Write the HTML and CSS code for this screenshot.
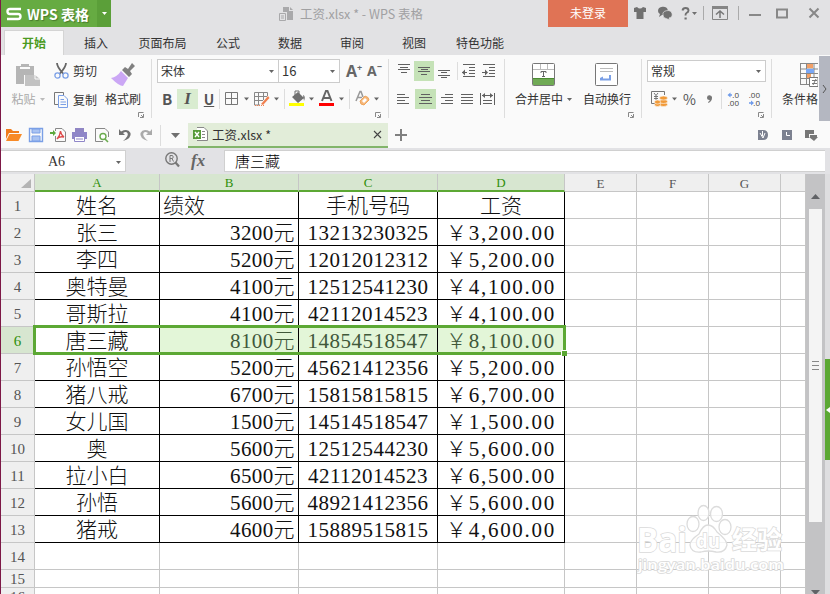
FILE: index.html
```html
<!DOCTYPE html>
<html lang="zh-CN">
<head>
    <meta charset="UTF-8">
    <title>工资.xlsx * - WPS 表格</title>
    <link rel="stylesheet" href="styles.css">
</head>
<body>
    <div class="window">
        <div class="titlebar">
            <div class="brand">
                <svg width="16" height="14" viewBox="0 0 16 14" fill="none" stroke="#fff" stroke-width="2.4"><path d="M15 2H4Q1.500 2 1.500 4.500Q1.500 7 4 7H12Q14.500 7 14.500 9.500Q14.500 12 12 12H1"/></svg>
                <span class="brand-name">WPS 表格</span>
                <span class="brand-more"><svg width="5" height="3"><path d="M0 0H5L2.500 3Z" fill="#fff"/></svg></span>
            </div>
            <div class="doc-title">
                <svg width="15" height="14" viewBox="0 0 15 14"><path d="M4 0H10V4H14V13H8V5H4Z" fill="#a9a9ab"/><path d="M11 0L14 3H11Z" fill="#a9a9ab"/><path d="M.5 6.500H6.500V13.500H.5ZM2 9H5M2 11H5" fill="none" stroke="#a9a9ab"/></svg>
                <span>工资.xlsx * - WPS 表格</span>
            </div>
            <div class="login">未登录</div>
            <div class="win-icons">
                <svg width="202" height="27" viewBox="0 0 202 27">
                    <path d="M6 8L9 7Q12 10 15 7L18 8V12H15.500V19H8.500V12H6Z" fill="#707070"/>
                    <path d="M30 11A5 4.300 0 1 1 37 15L34 15L31 17L32 14Q30 13 30 11Z" fill="#707070"/>
                    <path d="M35 15A4.600 3.800 0 1 1 41 18L42 20L38 18.500Q35 18 35 15Z" fill="#707070" stroke="#e2e2e4" stroke-width=".7"/>
                    <path d="M54.500 10.500Q55 8 57.500 8Q60.500 8 60.500 10.500Q60.500 12 58.500 13Q57.500 13.600 57.500 15.500" fill="none" stroke="#707070" stroke-width="1.900"/><path d="M56.500 17.500H58.700V19.500H56.500Z M64 12H69L66.500 15Z" fill="#707070"/>
                    <path d="M75.500 6V20M110.500 6V20" stroke="#aaa"/>
                    <path d="M84.500 6.500H99.500V19.500H84.500Z" fill="none" stroke="#858585"/><path d="M84 6H100V9H84Z" fill="#858585"/>
                    <path d="M92 18V11.500M88 14.500L92 11L96 14.500" fill="none" stroke="#777" stroke-width="1.500"/>
                    <path d="M121 15H133" stroke="#888" stroke-width="2"/>
                    <path d="M149 9.500H159V17.500H149Z" fill="none" stroke="#888" stroke-width="2"/>
                    <path d="M181.500 8.500L190.500 17.500M190.500 8.500L181.500 17.500" stroke="#888" stroke-width="2"/>
                </svg>
            </div>
        </div>

        <div class="tabs">
            <div class="tab active">开始</div>
            <div class="tab">插入</div>
            <div class="tab wide">页面布局</div>
            <div class="tab">公式</div>
            <div class="tab">数据</div>
            <div class="tab">审阅</div>
            <div class="tab">视图</div>
            <div class="tab special">特色功能</div>
        </div>

        <div class="ribbon">
            <div class="group clipboard">
                <div class="big-tool paste">
                    <svg width="25" height="24" viewBox="0 0 25 24"><path d="M0 3H5V1H13V3H18V12H8V21H0Z" fill="#b5b5b5"/><path d="M4 4H14V6H4Z" fill="#fafafa"/><path d="M9 12H19L24 16V23H9Z" fill="#c2c2c2"/><path d="M19 12V16H24" fill="none" stroke="#fafafa"/></svg>
                    <span class="label">粘贴<svg class="caret" width="5" height="3"><path d="M0 0H5L2.500 3Z"/></svg></span>
                </div>
                <div class="small-tools">
                    <div class="small-tool">
                        <svg width="15" height="16" viewBox="0 0 15 16" fill="none"><path d="M3 0Q3 4 9.500 11M12 0Q12 4 5.500 11" stroke="#666" stroke-width="1.800"/><circle cx="3.500" cy="12.500" r="2.600" stroke="#7a9fe6" stroke-width="1.300"/><circle cx="11.500" cy="12.500" r="2.600" stroke="#7a9fe6" stroke-width="1.300"/></svg>
                        <span>剪切</span>
                    </div>
                    <div class="small-tool">
                        <svg width="15" height="16" viewBox="0 0 15 16" fill="none"><path d="M4 12.500H.5V.5H9.500V3" stroke="#777"/><path d="M4.500 3.500H10L13.500 7V15.500H4.500Z" stroke="#7a9fe6"/><path d="M6.500 7.500H10M6.500 10H12M6.500 12.500H12" stroke="#7a9fe6"/></svg>
                        <span>复制</span>
                    </div>
                </div>
                <div class="big-tool brush">
                    <svg width="24" height="24" viewBox="0 0 24 24"><path d="M11 7L14 4L17 6L21 0L24 3L19 8L21 11L18 14Z" fill="#808080"/><path d="M10 8L17 15L12 23Q8 23 0 15Q6 14 10 8Z" fill="#cba7f5"/></svg>
                    <span class="label">格式刷</span>
                </div>
                <svg class="launcher" width="6" height="6" viewBox="0 0 6 6"><path d="M.5 5V.5H5.500M5.500 2V5.500H2M3 3L5 5" fill="none" stroke="#888"/></svg>
            </div>

            <div class="group font">
                <div class="row top">
                    <div class="combo family"><span>宋体</span><svg width="5" height="3"><path d="M0 0H5L2.500 3Z"/></svg></div>
                    <div class="combo size"><span>16</span><svg width="5" height="3"><path d="M0 0H5L2.500 3Z"/></svg></div>
                    <span class="grow">A<sup>+</sup></span>
                    <span class="shrink">A<sup>−</sup></span>
                </div>
                <div class="row bottom">
                    <span class="btn bold">B</span>
                    <span class="btn italic on">I</span>
                    <span class="btn underline">U</span>
                    <svg width="164" height="20" viewBox="0 0 164 20">
                        <path d="M.5 0V20M65.500 0V20M130.500 0V20" stroke="#ddd"/>
                        <path d="M6.500 3.500H18.500V15.500H6.500ZM12.500 3.500V15.500M6.500 9.500H18.500" fill="none" stroke="#777"/>
                        <path d="M25 8.500H30L27.500 11.500ZM55 8.500H60L57.500 11.500ZM90 8.500H95L92.500 11.500ZM120 8.500H125L122.500 11.500ZM155 8.500H160L157.500 11.500Z" fill="#666"/>
                        <path d="M48.500 7V3.500H35.500V16H41M35 7.500H48M35 11.500H44M39.500 3V16M44.500 3V11" fill="none" stroke="#888"/><path d="M42 15L49 7L50.500 9L44 16Z" fill="#f08050"/><path d="M36 16.500H45" stroke="#f08050" stroke-dasharray="1 1"/>
                        <path d="M73 8L79 3L85 9L79 14ZM84 6Q87 7 85 12Z" fill="#707070"/><path d="M76 8V2H80V6" fill="none" stroke="#707070"/><path d="M70 14H85V17H70Z" fill="#ff0"/>
                        <path d="M103 12L107 2H108.500L112.500 12M104.500 9H111" fill="none" stroke="#666" stroke-width="2"/><path d="M100 14H115V17H100Z" fill="#f00"/>
                        <path d="M137 12L141 2.500H142L144 8M138.500 8.500H143" fill="none" stroke="#999" stroke-width="1.500"/><path d="M141 12L146 7Q150 8 150 11L145 16Q141 16 141 12Z" fill="#f5b77b" stroke="#efa55c"/><path d="M143 12L146 9L148 11L145 14Z" fill="#fff"/>
                    </svg>
                </div>
                <svg class="launcher" width="6" height="6" viewBox="0 0 6 6"><path d="M.5 5V.5H5.500M5.500 2V5.500H2M3 3L5 5" fill="none" stroke="#888"/></svg>
            </div>

            <div class="group align">
                <div class="row top">
                    <svg class="ib" viewBox="0 0 20 20"><path d="M4 3.500H16M6 6.500H14M4 8.500H16M7 11.500H13"/></svg>
                    <svg class="ib on" viewBox="0 0 20 20"><path d="M4 6.500H16M7 8.500H14M4 10.500H16M7 13.500H13"/></svg>
                    <svg class="ib" viewBox="0 0 20 20"><path d="M4 9.500H16M7 11.500H13M4 14.500H16M7 16.500H13"/></svg>
                    <svg class="ib indent" viewBox="0 0 20 20"><path d="M5 3.500H17M11 6.500H17M11 9.500H17M11 12.500H17M5 15.500H17M4 11.500H9"/><path d="M4 11.500L7 8.500V14.500Z" class="solid"/></svg>
                    <svg class="ib" viewBox="0 0 20 20"><path d="M5 3.500H17M11 6.500H17M11 9.500H17M11 12.500H17M5 15.500H17M4 11.500H9"/><path d="M10 11.500L7 8.500V14.500Z" class="solid"/></svg>
                </div>
                <div class="row bottom">
                    <svg class="ib w21" viewBox="0 0 21 20"><path d="M3 5.500H11M3 8.500H15M3 11.500H11M3 14.500H15"/></svg>
                    <svg class="ib w21 on" viewBox="0 0 21 20"><path d="M6 5.500H15M4 8.500H17M6 11.500H15M4 14.500H17"/></svg>
                    <svg class="ib w21" viewBox="0 0 21 20"><path d="M9 5.500H17M5 8.500H17M9 11.500H17M5 14.500H17"/></svg>
                    <svg class="ib w21" viewBox="0 0 21 20"><path d="M4 5.500H16M4 8.500H16M4 11.500H16M4 14.500H16"/></svg>
                    <svg class="ib w21" viewBox="0 0 21 20"><path d="M2.500 4V16M16.500 4V16M4 6.500H15M5 11.500H14M5 14.500H14"/><path d="M4 6.500L7 4V9ZM15 6.500L12 4V9Z" class="solid"/></svg>
                </div>
            </div>

            <div class="group cells">
                <div class="big-tool merge">
                    <svg width="24" height="24" viewBox="0 0 24 24"><rect x=".5" y=".5" width="22" height="22" rx="1" fill="#fff" stroke="#777"/><path d="M1 6.500H22M8.500 1V6M15.500 1V6" stroke="#bbb"/><path d="M1 15H22V22H1Z" fill="#70aa55"/><path d="M1 15.500H22" stroke="#4d8c34"/><path d="M9 10V8.500H14V10M11.500 8.500V13.500M10 13.500H13" fill="none" stroke="#666"/></svg>
                    <span class="label">合并居中<svg class="caret" width="5" height="3"><path d="M0 0H5L2.500 3Z"/></svg></span>
                </div>
                <div class="big-tool wrap">
                    <svg width="24" height="24" viewBox="0 0 24 24"><rect x=".5" y=".5" width="22" height="22" rx="1" fill="#fff" stroke="#777"/><path d="M5 5.500H18M5 8.500H18" stroke="#bbb"/><path d="M5 17.500V15L8 13.500V15.500H14V12H16V17.500Z" fill="#7a9fe6"/></svg>
                    <span class="label">自动换行</span>
                </div>
                <svg class="launcher" width="6" height="6" viewBox="0 0 6 6"><path d="M.5 5V.5H5.500M5.500 2V5.500H2M3 3L5 5" fill="none" stroke="#888"/></svg>
            </div>

            <div class="group number">
                <div class="combo format"><span>常规</span><svg width="5" height="3"><path d="M0 0H5L2.500 3Z"/></svg></div>
                <div class="row bottom">
                    <svg width="31" height="20" viewBox="0 0 31 20"><path d="M4 14.500H.5V2.500H13.500V6" fill="none" stroke="#777"/><path d="M3 4L5 6.500L7 4M5 6.500V11M3 7.500H7M3 9.500H7" fill="none" stroke="#777"/><g fill="#f19a38" stroke="#fafafa" stroke-width=".6"><ellipse cx="12.500" cy="15.500" rx="4" ry="2"/><ellipse cx="12.500" cy="12.500" rx="4" ry="2"/><ellipse cx="12.500" cy="9" rx="4" ry="2"/><ellipse cx="6.500" cy="15.500" rx="3" ry="2"/><ellipse cx="6.500" cy="13" rx="3" ry="2"/></g><path d="M21 8.500H26L23.500 11.500Z" fill="#666"/></svg>
                    <span class="percent">%</span>
                    <svg class="comma" width="6" height="8"><path d="M0 2.500A2.500 2.500 0 1 1 5 3Q5 6 1.500 8L1 7Q3 6 2.500 5Q0 5 0 2.500Z" fill="#777"/></svg>
                    <svg class="decimals" width="42" height="20" viewBox="0 0 42 20">
                        <path d="M.5 0V20" stroke="#ddd"/>
                        <text x="18" y="9">.0</text><text x="18" y="17">.00</text>
                        <text x="39" y="9">.00</text><text x="39" y="17">.0</text>
                        <path d="M11 6H8M28 14H31" stroke="#6f9bea" stroke-width="1.400"/><path d="M6.500 6L9.500 3.500V8.500ZM33 14L30 11.500V16.500Z" fill="#6f9bea"/>
                    </svg>
                </div>
                <svg class="launcher" width="6" height="6" viewBox="0 0 6 6"><path d="M.5 5V.5H5.500M5.500 2V5.500H2M3 3L5 5" fill="none" stroke="#888"/></svg>
            </div>

            <div class="group style">
                <div class="big-tool cond">
                    <svg width="18" height="24" viewBox="0 0 18 24"><path d="M.5 .5H18M.5 0V22M.5 6H18M.5 10.500H18M.5 15.500H12M.5 21.500H9M6.500 0V22M14 0V14" fill="none" stroke="#888"/><path d="M7 1H13V5H7Z M7 11H11V15H7Z" fill="#f3a067"/><path d="M6 6H14V10H6Z" fill="#7aa7f5"/><path d="M9.500 14.500H18V23.500H9.500ZM12 17.500H17M12 20.500H17M16 16L13 22" fill="#fff" stroke="#777"/></svg>
                    <span class="label">条件格</span>
                </div>
            </div>
            <div class="ribbon-next"><svg width="5" height="8" fill="none" stroke="#555"><path d="M1 0L4 4L1 8"/></svg></div>
        </div>

        <div class="docbar">
            <svg width="187" height="26" viewBox="0 0 187 26">
                <path d="M5 7H10L12 9H18V11H8L5 17Z" fill="#f07c1c"/><path d="M8.500 12H21L17.500 19H5Z" fill="#f88a27"/>
                <path d="M28.500 6.500H41.500V19.500H28.500Z" fill="none" stroke="#7a9fe6" stroke-width="1.400"/><path d="M31 7H39V11H31ZM31 14H39V19H31Z" fill="#a9c3f2" stroke="#7a9fe6"/>
                <path d="M54.500 9V6.500H61L64.500 10V19.500H54.500V14" fill="none" stroke="#888"/><path d="M49 10H52V8L55 11L52 14V12H49Z" fill="#5ca83c"/><path d="M59.500 9Q60 13 63 15Q58 14 56 17Q59 14 59.500 9Z" fill="none" stroke="#dd4b4b" stroke-width="1.300"/>
                <path d="M74 6H83V10H74Z" fill="#9086c4"/><path d="M71 10H86V17H71Z" fill="#8f86c8"/><path d="M73.500 14.500H83.500V19.500H73.500ZM75 17H82" fill="#fff" stroke="#8f86c8"/>
                <path d="M102 19.500H94.500V6.500H104L107.500 10V15" fill="none" stroke="#888"/><circle cx="102" cy="14.500" r="3" fill="#fff" stroke="#6bab4f" stroke-width="1.400"/><path d="M104 17L107 20" stroke="#6bab4f" stroke-width="1.600"/>
                <path d="M118 7V13H124L122 11Q125 9 126.500 11Q128 14 122 19Q131 16 129.500 11Q127 6 120 9.500Z" fill="#707070"/>
                <path d="M151 7V13H145L147 11Q144 9 142.500 11Q141 14 147 19Q138 16 139.500 11Q142 6 149 9.500Z" fill="#aaa"/>
                <path d="M159.500 3V24" stroke="#ddd"/><path d="M170 11H179L174.500 16Z" fill="#707070"/>
            </svg>
            <div class="doc-tab">
                <svg width="15" height="15" viewBox="0 0 15 15"><path d="M4 .5H11L14.500 4V13.500H4M9 4.500H12M9 7.500H12M9 10.500H12" fill="#fff" stroke="#888"/><path d="M0 3H8V12H0Z" fill="#569b38"/><path d="M2 5L6 10M6 5L2 10" stroke="#fff" stroke-width="1.400"/></svg>
                <span>工资.xlsx *</span>
                <svg class="close" width="9" height="9"><path d="M1 1L8 8M8 1L1 8" stroke="#444" stroke-width="1.100"/></svg>
            </div>
            <svg class="plus" width="12" height="12"><path d="M6 0V12M0 6H12" stroke="#808080" stroke-width="2"/></svg>
            <svg class="doc-tools" width="62" height="14" viewBox="0 0 62 14"><path d="M0 2H5Q10 2 10 7Q10 12 5 12H0Z" fill="#7c8190"/><path d="M2 5L5 10L7 5M4.500 3V8" stroke="#fff" fill="none"/><path d="M24 2H34V12H24Z" fill="#7c8190"/><path d="M28.500 4V7.500H32" fill="none" stroke="#fff"/><path d="M47 2H56V6H51V10H47Z" fill="#777"/><path d="M52 7H59V9H60L56 13L51 9H52Z" fill="#777"/></svg>
        </div>

        <div class="formulabar">
            <div class="name-box"><span>A6</span><svg width="5" height="3"><path d="M0 0H5L2.500 3Z" fill="#666"/></svg></div>
            <svg class="lookup" width="15" height="16" viewBox="0 0 15 16" fill="none" stroke="#777"><circle cx="6.500" cy="6.500" r="5.700" stroke-width="1.400"/><path d="M10.500 10.500L14 14.500" stroke-width="2.200"/><path d="M5 10V3.500H7.500Q9 5 7.500 6.500H5M7 6.500L8.500 9.500"/></svg>
            <span class="fx">fx</span>
            <div class="formula">唐三藏</div>
        </div>

        <div class="workspace">
            <div class="sheet">
                <table class="grid">
                    <colgroup>
                        <col class="c-num"><col class="c-a"><col class="c-b"><col class="c-c"><col class="c-d">
                        <col class="c-e"><col class="c-e"><col class="c-e"><col class="c-h">
                    </colgroup>
                    <thead>
                        <tr>
                            <th class="corner"><svg width="10" height="9"><path d="M10 0V9H0Z" fill="#b4b4b4"/></svg></th>
                            <th class="sel">A</th><th class="sel">B</th><th class="sel">C</th><th class="sel">D</th>
                            <th>E</th><th>F</th><th>G</th><th></th>
                        </tr>
                    </thead>
                    <tbody id="rows"></tbody>
                </table>
                <div class="selection"><div class="handle"></div></div>
                <div class="watermark">
                    <svg width="152" height="84" viewBox="0 0 152 84">
                        <g fill="#fff" fill-opacity=".8" stroke="#dcdcdc" stroke-width="1.300">
                            <ellipse cx="56" cy="30" rx="6" ry="7.500"/><ellipse cx="66.500" cy="19" rx="5.500" ry="7.500"/><ellipse cx="79.500" cy="20" rx="6" ry="7.500"/><ellipse cx="88" cy="33" rx="6" ry="7.500"/>
                            <path d="M71 31Q76 31 80 38Q90 46 90 51Q88 59 79 58Q71 56 64 58Q54 59 53 51Q53 46 62 40Q66 31 71 31Z"/>
                        </g>
                        <text class="wm-logo" x="0" y="58" textLength="50" lengthAdjust="spacingAndGlyphs">Bai</text>
                        <text class="wm-du" x="59" y="54" textLength="24" lengthAdjust="spacingAndGlyphs">du</text>
                        <text class="wm-cn" x="95" y="55" textLength="50" lengthAdjust="spacingAndGlyphs">经验</text>
                        <text class="wm-url" x="1" y="76" textLength="146" lengthAdjust="spacingAndGlyphs">jingyan.baidu.com</text>
                    </svg>
                </div>
            </div>
            <div class="scrollbar">
                <div class="split"></div>
                <svg width="9" height="5"><path d="M0 5H9L4.500 0Z" fill="#606266"/></svg>
                <div class="thumb"><i></i><i></i><i></i></div>
                <svg class="down" width="9" height="5"><path d="M0 0H9L4.500 5Z" fill="#606266"/></svg>
            </div>
            <div class="side"><div class="side-handle"><svg width="4" height="6"><path d="M4 0V6L0 3Z" fill="#fff"/></svg></div></div>
        </div>
    </div>

    <script>
        const data = [
            ['姓名', '绩效', '手机号码', '工资'],
            ['张三', '3200元', '13213230325', '￥3,200.00'],
            ['李四', '5200元', '12012012312', '￥5,200.00'],
            ['奥特曼', '4100元', '12512541230', '￥4,100.00'],
            ['哥斯拉', '4100元', '42112014523', '￥4,100.00'],
            ['唐三藏', '8100元', '14854518547', '￥8,100.00'],
            ['孙悟空', '5200元', '45621412356', '￥5,200.00'],
            ['猪八戒', '6700元', '15815815815', '￥6,700.00'],
            ['女儿国', '1500元', '14514518547', '￥1,500.00'],
            ['奥', '5600元', '12512544230', '￥5,600.00'],
            ['拉小白', '6500元', '42112014523', '￥6,500.00'],
            ['孙悟', '5600元', '48921412356', '￥5,600.00'],
            ['猪戒', '4600元', '15889515815', '￥4,600.00']
        ];

        let html = '';
        for (let r = 1; r <= 16; r++) {
            const row = data[r - 1];
            let cls = row ? 'filled' : '';
            if (r === 1) cls += ' head';
            if (r === 6) cls += ' current';
            if (r >= 15) cls += ' short';
            html += `<tr class="${cls}"><th>${r}</th>`;
            for (let c = 0; c < 8; c++) {
                html += `<td>${row && row[c] ? row[c] : ''}</td>`;
            }
            html += '</tr>';
        }
        document.getElementById('rows').innerHTML = html;
    </script>
</body>
</html>
```
FILE: styles.css
```css
* {
    box-sizing: border-box;
}
body {
    margin: 0;
    overflow: hidden;
    font-family: "Noto Sans CJK SC", sans-serif;
    font-size: 12px;
    line-height: 16px;
    color: #333;
}
svg {
    display: block;
    flex: none;
}
.window {
    width: 830px;
    height: 594px;
    overflow: hidden;
    display: flex;
    flex-direction: column;
    background: #e2e2e4;
    border-left: 1px solid #7d1846;
}

/* title bar */
.titlebar {
    display: flex;
    height: 27px;
    flex: none;
}
.brand {
    display: flex;
    align-items: center;
    width: 110px;
    padding-left: 5px;
    background: #66ab42;
}
.brand-name {
    width: 75px;
    padding-left: 5px;
    color: #fff;
    font-size: 14px;
    font-weight: bold;
    white-space: nowrap;
    text-shadow: 1px 1px 1px #477a2c;
}
.brand-more {
    display: flex;
    align-items: center;
    justify-content: center;
    flex: 1;
    height: 27px;
    background: #5b9f39;
}
.doc-title {
    display: flex;
    align-items: center;
    gap: 6px;
    width: 437px;
    padding-left: 168px;
    color: #a0a0a2;
    font-size: 12.5px;
    white-space: nowrap;
}
.login {
    width: 80px;
    background: #e07355;
    color: #fff;
    line-height: 26px;
    text-align: center;
}

/* menu tabs */
.tabs {
    display: flex;
    height: 28px;
    flex: none;
    padding: 3px 0 0 3px;
}
.tab {
    width: 62px;
    line-height: 26px;
    text-align: center;
}
.tab.active {
    width: 60px;
    background: #fafafa;
    border: 1px solid #d4d4d4;
    border-bottom: 0;
    color: #4a9a22;
    font-weight: bold;
    line-height: 24px;
}
.tab.active + .tab {
    width: 64px;
}
.tab.wide {
    width: 69px;
}
.tab.special {
    width: 70px;
}

/* ribbon */
.ribbon {
    display: flex;
    height: 67px;
    flex: none;
    background: #fafafa;
}
.group {
    position: relative;
    height: 59px;
    margin-top: 4px;
    border-right: 1px solid #ddd;
}
.launcher {
    position: absolute;
    right: 7px;
    bottom: 0;
}
.row {
    display: flex;
    align-items: center;
}
.label {
    display: flex;
    align-items: center;
    gap: 4px;
    margin-top: 4px;
    white-space: nowrap;
}
.caret {
    fill: #666;
}
.big-tool {
    display: flex;
    flex-direction: column;
    align-items: center;
    padding-top: 4px;
}
.clipboard {
    display: flex;
    width: 151px;
    padding-left: 10px;
}
.paste {
    width: 34px;
    color: #aaa;
}
.paste .caret {
    fill: #bbb;
}
.small-tools {
    display: flex;
    flex-direction: column;
    gap: 12px;
    margin-left: 9px;
    padding-top: 3px;
}
.small-tool {
    display: flex;
    align-items: center;
    gap: 4px;
    height: 17px;
}
.brush {
    width: 36px;
    margin-left: 8px;
}
.font {
    width: 237px;
    padding-left: 5px;
}
.font .bottom {
    margin-top: 6px;
}
.combo {
    display: flex;
    align-items: center;
    justify-content: space-between;
    height: 24px;
    padding: 0 4px 0 3px;
    background: #fff;
    border: 1px solid #ccc;
    fill: #666;
}
.family {
    width: 122px;
}
.size {
    width: 62px;
    margin-left: -1px;
    font-size: 13px;
}
.grow, .shrink {
    font-size: 16px;
    font-weight: bold;
    color: #666;
    font-family: "Open Sans", sans-serif;
    line-height: 20px;
    white-space: nowrap;
}
.grow {
    margin-left: 6px;
    width: 21px;
}
.shrink {
    font-size: 14px;
}
.grow sup, .shrink sup {
    font-size: 9px;
    line-height: 1px;
}
.btn {
    width: 21px;
    height: 20px;
    line-height: 20px;
    text-align: center;
    font-size: 15px;
    color: #555;
}
.bold {
    font-weight: bold;
    width: 20px;
}
.italic {
    font-family: "Liberation Serif", serif;
    font-style: italic;
    font-size: 17px;
    font-weight: bold;
}
.on {
    background: #d9ecd0;
}
.underline {
    text-decoration: underline;
    font-weight: bold;
    font-size: 14px;
    width: 22px;
    margin-right: -1px;
}
.align {
    width: 116px;
    padding: 2px 0 0 5px;
}
.align .bottom {
    margin-top: 8px;
}
.ib {
    width: 20px;
    height: 20px;
    fill: none;
    stroke: #606060;
}
.ib.on {
    background: #c5e2b7;
}
.ib .solid {
    fill: #606060;
    stroke: none;
}
.indent {
    margin-left: 4px;
    box-shadow: -2px 0 0 -1px #ddd;
}
.w21 {
    width: 21px;
}
.cells {
    display: flex;
    width: 137px;
    padding-left: 10px;
}
.merge {
    width: 58px;
    align-items: flex-start;
}
.merge > svg {
    margin-left: 17px;
}
.wrap {
    width: 48px;
    margin-left: 10px;
}
.number {
    width: 130px;
    padding: 1px 0 0 5px;
}
.format {
    width: 119px;
    height: 22px;
}
.number .bottom {
    margin-top: 7px;
    padding-left: 4px;
    height: 20px;
}
.percent {
    width: 21px;
    padding-left: 1px;
    color: #555;
    font-size: 14px;
}
.comma {
    margin: 0 8px 0 4px;
}
.decimals text {
    font: 8px "Open Sans", sans-serif;
    fill: #444;
    text-anchor: end;
}
.style {
    width: 47px;
    padding-left: 10px;
    border-right: 0;
    overflow: hidden;
}
.cond {
    align-items: flex-start;
}
.cond > svg {
    margin-left: 18px;
}
.ribbon-next {
    display: flex;
    align-items: center;
    justify-content: center;
    width: 11px;
    height: 65px;
    margin-top: 1px;
    background: #b4b7c1;
}

/* quick access bar and document tabs */
.docbar {
    display: flex;
    height: 26px;
    flex: none;
    background: #fafafa;
}
.doc-tab {
    display: flex;
    align-items: center;
    gap: 4px;
    width: 200px;
    margin-top: 1px;
    padding: 0 6px 0 5px;
    background: #e2edd9;
    border-bottom: 2px solid #82b56a;
    font-size: 12.5px;
}
.close {
    margin-left: auto;
}
.plus {
    margin: 7px 0 0 7px;
}
.doc-tools {
    margin: 6px 10px 0 auto;
}

/* formula bar */
.formulabar {
    display: flex;
    height: 26px;
    flex: none;
    padding-top: 2px;
    background: #e2e2e5;
}
.name-box {
    display: flex;
    align-items: center;
    width: 125px;
    height: 22px;
    padding: 2px 4px 0 47px;
    background: #fff;
    border: 1px solid #d0d0d0;
    border-left: 0;
    font: 14px "Liberation Serif", serif;
}
.name-box svg {
    margin-left: auto;
}
.lookup {
    margin: 2px 0 0 39px;
}
.fx {
    width: 44px;
    padding-left: 11px;
    font: italic bold 17px/21px "Liberation Serif", serif;
    color: #666;
}
.formula {
    width: 601px;
    height: 22px;
    padding-left: 10px;
    background: #fff;
    border: 1px solid #d0d0d0;
    border-right: 0;
    color: #000;
    font-size: 15px;
    font-weight: 300;
    line-height: 20px;
}

/* sheet */
.workspace {
    display: flex;
    height: 420px;
}
.sheet {
    position: relative;
    width: 805px;
    overflow: hidden;
    background: #fff;
}
.grid {
    table-layout: fixed;
    width: 805px;
    border-spacing: 0;
}
.c-num { width: 34px; }
.c-a { width: 125px; }
.c-b { width: 139px; }
.c-c { width: 139px; }
.c-d { width: 127px; }
.c-e { width: 72px; }
.c-h { width: 25px; }
th, td {
    padding: 0;
    overflow: hidden;
    white-space: nowrap;
    border-right: 1px solid #c6c6c6;
    border-bottom: 1px solid #c6c6c6;
}
th {
    background: #efefef;
    color: #555;
    font: 15px/17px "Liberation Serif", serif;
}
thead th {
    height: 18px;
    padding-top: 2px;
    font-size: 13px;
    line-height: 14px;
}
thead th.sel {
    background: #d7e6d0;
    border-bottom: 2px solid #5ca834;
    color: #2f8f0a;
}
.corner svg {
    margin: 0 3px 0 auto;
}
tbody th, td {
    height: 27px;
}
tbody th {
    padding-top: 2px;
}
.short th, .short td {
    height: 18px;
}
.short th {
    padding-top: 1px;
    line-height: 16px;
}
td {
    color: #111;
    font: 300 21px/24px "Liberation Serif", "Noto Sans CJK SC", serif;
    text-align: center;
}
.filled td {
    padding-top: 2px;
}
.filled td:nth-child(-n+5) {
    border-color: #000;
}
td:nth-child(3) {
    padding-right: 3px;
    text-align: right;
    letter-spacing: .4px;
}
.head td:nth-child(3) {
    padding-left: 3px;
    text-align: left;
    letter-spacing: 0;
}
td:nth-child(4) {
    letter-spacing: .5px;
}
.head td:nth-child(4) {
    letter-spacing: 0;
}
td:nth-child(5) {
    letter-spacing: 1.7px;
}
.head td:nth-child(5) {
    letter-spacing: 0;
}
.current th {
    background: #d7e6d0;
    color: #2f8f0a;
}
.current td:nth-child(n+3):nth-child(-n+5) {
    background: #e3f6d8;
    color: #40583a;
}
.selection {
    position: absolute;
    left: 32px;
    top: 151px;
    width: 533px;
    height: 30px;
    border: 3px solid #5ca834;
}
.handle {
    position: absolute;
    right: -4px;
    bottom: -4px;
    width: 6px;
    height: 6px;
    background: #5ca834;
    border: 1px solid #fff;
    border-width: 1px 0 0 1px;
}
.watermark {
    position: absolute;
    left: 636px;
    top: 320px;
}
.watermark text {
    fill: #fff;
    stroke: #dadada;
    stroke-width: 1.6px;
    paint-order: stroke;
    font-family: "Open Sans", "Noto Sans CJK SC", sans-serif;
    font-weight: bold;
}
.wm-logo {
    font-size: 34px;
}
.wm-du {
    font-size: 20px;
}
.wm-cn {
    font-size: 25px;
}
.watermark .wm-url {
    font-size: 15px;
    font-weight: 600;
}

/* scrollbar and side strip */
.scrollbar {
    display: flex;
    flex-direction: column;
    align-items: center;
    width: 19px;
    padding-top: 7px;
    background: #c3c3c5;
}
.split {
    width: 13px;
    height: 2px;
    margin-bottom: 13px;
    background: #97979a;
}
.thumb {
    display: flex;
    flex-direction: column;
    align-items: center;
    justify-content: center;
    gap: 3px;
    width: 13px;
    height: 313px;
    margin: 10px 0 68px;
    background: #f4f4f4;
    flex: none;
}
.thumb i {
    width: 7px;
    height: 1px;
    background: #888;
}
.side {
    width: 5px;
    padding-top: 185px;
    background: #dedee0;
}
.side-handle {
    display: flex;
    align-items: center;
    justify-content: flex-end;
    height: 101px;
    background: #5ca834;
}
```
